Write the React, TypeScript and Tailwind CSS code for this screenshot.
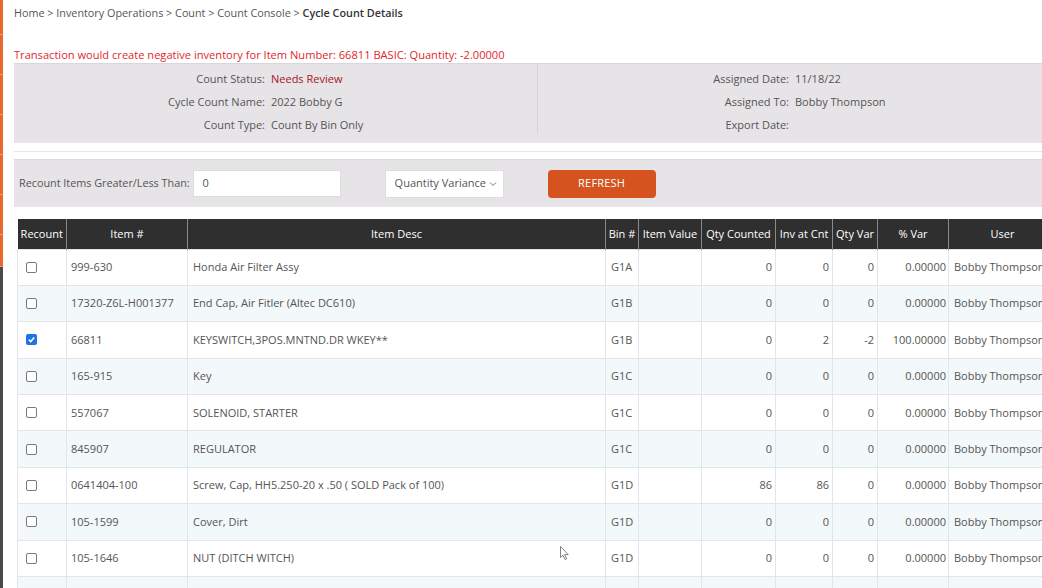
import React from "react";

const FONT = "font-['Open_Sans',_'Liberation_Sans',_sans-serif]";

type Row = {
  item: string;
  desc: string;
  bin: string;
  counted: number;
  inv: number;
  varQty: number;
  pct: string;
  checked?: boolean;
};

const ROWS: Row[] = [
  { item: "999-630", desc: "Honda Air Filter Assy", bin: "G1A", counted: 0, inv: 0, varQty: 0, pct: "0.00000" },
  { item: "17320-Z6L-H001377", desc: "End Cap, Air Fitler (Altec DC610)", bin: "G1B", counted: 0, inv: 0, varQty: 0, pct: "0.00000" },
  { item: "66811", desc: "KEYSWITCH,3POS.MNTND.DR WKEY**", bin: "G1B", counted: 0, inv: 2, varQty: -2, pct: "100.00000", checked: true },
  { item: "165-915", desc: "Key", bin: "G1C", counted: 0, inv: 0, varQty: 0, pct: "0.00000" },
  { item: "557067", desc: "SOLENOID, STARTER", bin: "G1C", counted: 0, inv: 0, varQty: 0, pct: "0.00000" },
  { item: "845907", desc: "REGULATOR", bin: "G1C", counted: 0, inv: 0, varQty: 0, pct: "0.00000" },
  { item: "0641404-100", desc: "Screw, Cap, HH5.250-20 x .50 ( SOLD Pack of 100)", bin: "G1D", counted: 86, inv: 86, varQty: 0, pct: "0.00000" },
  { item: "105-1599", desc: "Cover, Dirt", bin: "G1D", counted: 0, inv: 0, varQty: 0, pct: "0.00000" },
  { item: "105-1646", desc: "NUT (DITCH WITCH)", bin: "G1D", counted: 0, inv: 0, varQty: 0, pct: "0.00000" },
  { item: "", desc: "", bin: "", counted: 0, inv: 0, varQty: 0, pct: "" },
];

const COLS = [
  { label: "Recount", w: "w-[49px]" },
  { label: "Item #", w: "w-[121px]" },
  { label: "Item Desc", w: "w-[418px]" },
  { label: "Bin #", w: "w-[33px]" },
  { label: "Item Value", w: "w-[63px]" },
  { label: "Qty Counted", w: "w-[74px]" },
  { label: "Inv at Cnt", w: "w-[57px]" },
  { label: "Qty Var", w: "w-[45px]" },
  { label: "% Var", w: "w-[71px]" },
  { label: "User", w: "w-[108px]" },
];

function Checkbox({ checked }: { checked?: boolean }) {
  if (checked) {
    return (
      <span className="flex w-[11px] h-[11px] rounded-[2px] bg-[#1a73e8] items-center justify-center">
        <svg width="9" height="9" viewBox="0 0 10 10">
          <path d="M2 5.2 L4.2 7.3 L8 2.8" stroke="white" strokeWidth="1.8" fill="none" />
        </svg>
      </span>
    );
  }
  return <span className="block w-[11px] h-[11px] rounded-[2px] border border-[#7a7a7a] bg-white" />;
}

function InfoRow({ label, value, valueClass }: { label: string; value: string; valueClass?: string }) {
  return (
    <div className="flex h-[23px] items-center">
      <div className="w-[251px] text-right">{label}</div>
      <div className={`pl-[6px] ${valueClass ?? ""}`}>{value}</div>
    </div>
  );
}

function LeftStrip() {
  const segs = [35, 40, 40, 40, 40, 40, 32];
  return (
    <div className="flex flex-col w-[3px] shrink-0 bg-[#4a4a4a]">
      {segs.map((h, i) => (
        <div key={i} className="bg-[#e8692b] border-b border-[#f39a6a]" style={{ height: h }} />
      ))}
    </div>
  );
}

export default function App() {
  return (
    <div className={`relative flex w-[1042px] h-[588px] overflow-hidden bg-white ${FONT} text-[11px] text-[#555]`}>
      <LeftStrip />

      <div className="flex-1 min-w-0 pl-[11px]">
        {/* Breadcrumb */}
        <div className="h-[26px] pt-[5px] text-[10.8px] leading-[16px] text-[#555]">
          Home &gt; Inventory Operations &gt; Count &gt; Count Console &gt;{" "}
          <span className="font-semibold text-[#333]">Cycle Count Details</span>
        </div>

        {/* Error */}
        <div className="h-[37px] pt-[21px] text-[11.1px] text-[#e3262b] leading-[16px]">
          Transaction would create negative inventory for Item Number: 66811 BASIC: Quantity: -2.00000
        </div>

        {/* Count info */}
        <div className="flex h-[80px] bg-[#e6e4e7] border-t border-[#d9d7da]">
          <div className="w-[523px] pt-[4px]">
            <InfoRow label="Count Status:" value="Needs Review" valueClass="text-[#a8141c]" />
            <InfoRow label="Cycle Count Name:" value="2022 Bobby G" />
            <InfoRow label="Count Type:" value="Count By Bin Only" />
          </div>
          <div className="w-px bg-[#d6d4d8] mb-[10px]" />
          <div className="flex-1 pt-[4px]">
            <InfoRow label="Assigned Date:" value="11/18/22" />
            <InfoRow label="Assigned To:" value="Bobby Thompson" />
            <InfoRow label="Export Date:" value="" />
          </div>
        </div>

        <div className="h-[16px] flex items-center">
          <div className="w-full h-px bg-[#e6e6e6]" />
        </div>

        {/* Filter */}
        <div className="flex items-center h-[48px] bg-[#e6e4e7] pl-[5px] border-t border-[#dcdadd]">
          <span className="text-[10.8px] text-[#555]">Recount Items Greater/Less Than:</span>
          <div className="ml-[3px] w-[148px] h-[27px] bg-white border border-[#dddddd] flex items-center pl-[9px] text-[#555]">
            0
          </div>
          <div className="ml-[44px] w-[119px] h-[28px] bg-white border border-[#dddddd] flex items-center pl-[9px] pr-[6px] justify-between">
            <span>Quantity Variance</span>
            <svg width="8" height="6" viewBox="0 0 8 6">
              <path d="M1 1.5 L4 4.5 L7 1.5" stroke="#777" strokeWidth="1" fill="none" />
            </svg>
          </div>
          <button className="ml-[44px] w-[108px] h-[28px] rounded-[4px] bg-[#d4531f] text-white text-[11px] font-medium tracking-[0.2px]">
            REFRESH
          </button>
        </div>

        {/* Table */}
        <div className="pt-[12px] pl-[3px]">
          <table className="table-fixed border-collapse w-[1039px]">
            <thead>
              <tr className="bg-[#2f2f2f] text-white h-[30px]">
                {COLS.map((c) => (
                  <th
                    key={c.label}
                    className={`${c.w} font-normal text-[11px] text-center border-x border-[#8a8a8a] first:border-l-0 whitespace-nowrap px-0`}
                  >
                    {c.label}
                  </th>
                ))}
              </tr>
            </thead>
            <tbody>
              {ROWS.map((r, i) => (
                <tr key={i} className={`h-[36.4px] ${i % 2 === 1 ? "bg-[#f3f8fa]" : "bg-white"}`}>
                  <td className="border border-[#e2e5e9] pl-[8px]">{i < 9 ? <Checkbox checked={r.checked} /> : null}</td>
                  <td className="border border-[#e2e5e9] pl-[4px] whitespace-nowrap">{r.item}</td>
                  <td className="border border-[#e2e5e9] pl-[5px] whitespace-nowrap">{r.desc}</td>
                  <td className="border border-[#e2e5e9] pl-[5px]">{r.bin}</td>
                  <td className="border border-[#e2e5e9]" />
                  <td className="border border-[#e2e5e9] text-right pr-[3px]">{r.item ? r.counted : ""}</td>
                  <td className="border border-[#e2e5e9] text-right pr-[3px]">{r.item ? r.inv : ""}</td>
                  <td className="border border-[#e2e5e9] text-right pr-[3px]">{r.item ? r.varQty : ""}</td>
                  <td className="border border-[#e2e5e9] text-right pr-[2px]">{r.pct}</td>
                  <td className="border border-[#e2e5e9] pl-[5px] whitespace-nowrap">{r.item ? "Bobby Thompson" : ""}</td>
                </tr>
              ))}
            </tbody>
          </table>
        </div>
      </div>

      {/* mouse pointer */}
      <svg className="absolute left-[560px] top-[546px]" width="10" height="15" viewBox="0 0 10 15">
        <path d="M0.5 0.5 L0.5 11.5 L3 9.2 L5 13.5 L6.6 12.8 L4.7 8.6 L8.2 8.6 Z" fill="white" stroke="#666" strokeWidth="0.8" />
      </svg>
    </div>
  );
}
